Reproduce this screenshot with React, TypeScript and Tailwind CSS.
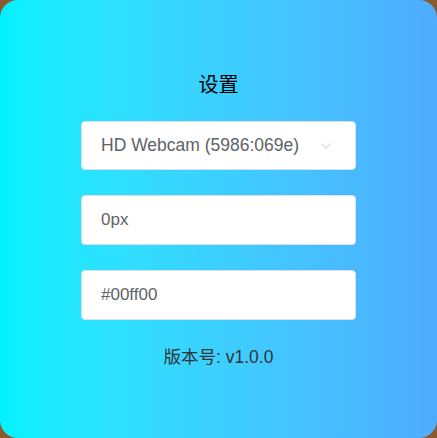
import { ChevronDown } from 'lucide-react';

const font = { fontFamily: '"Liberation Sans", "Noto Sans CJK SC", sans-serif' };

export default function App() {
  return (
    <div className="w-[437px] h-[438px] bg-[#8a5a2e]" style={font}>
      <div className="w-full h-full rounded-[18px] bg-gradient-to-r from-[#00f2fe] to-[#4facfe] flex flex-col items-center pt-[71px]">
        <h1 className="text-[20px] leading-[28px] text-black">设置</h1>

        <div className="mt-[22px] w-[275px] h-[49px] bg-white rounded-[4px] border border-[#dcdfe6] flex items-center pl-[19px] pr-[20px]">
          <span className="flex-1 text-[17.5px] text-[#606266]">HD Webcam (5986:069e)</span>
          <ChevronDown className="w-[18px] h-[18px] text-[#c0c4cc]" strokeWidth={1.2} />
        </div>

        <div className="mt-[25px] w-[275px] h-[50px] bg-white rounded-[4px] border border-[#dcdfe6] flex items-center pl-[19px]">
          <span className="text-[17px] text-[#606266]">0px</span>
        </div>

        <div className="mt-[25px] w-[275px] h-[50px] bg-white rounded-[4px] border border-[#dcdfe6] flex items-center pl-[19px]">
          <span className="text-[17px] text-[#606266]">#00ff00</span>
        </div>

        <p className="mt-[25px] text-[17.5px] leading-[24px] text-[#333]">版本号: v1.0.0</p>
      </div>
    </div>
  );
}
